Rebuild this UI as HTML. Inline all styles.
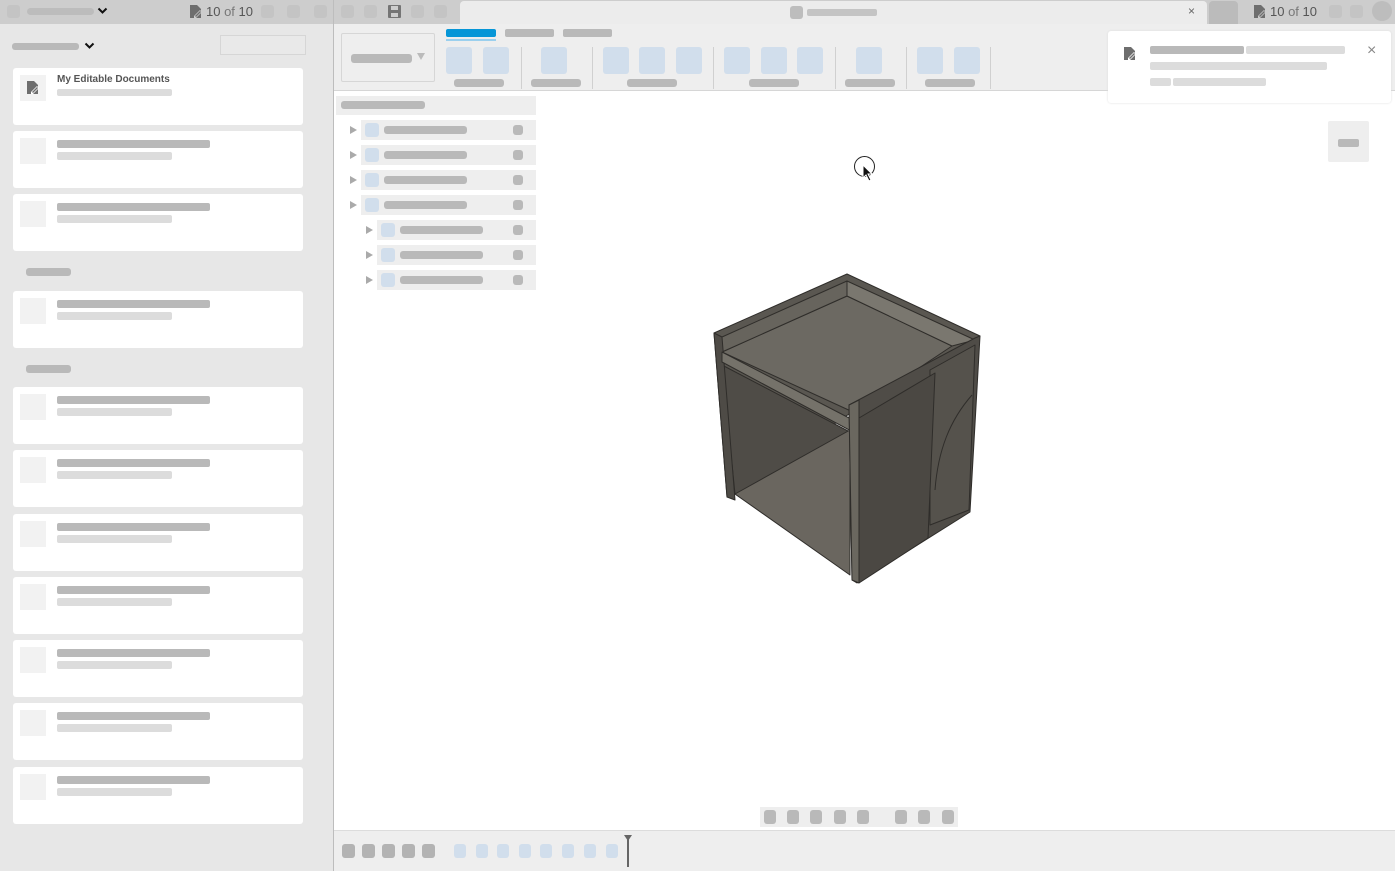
<!DOCTYPE html>
<html><head><meta charset="utf-8"><style>
*{margin:0;padding:0;box-sizing:border-box}
body{width:1395px;height:871px;position:relative;overflow:hidden;background:#fff;font-family:"Liberation Sans",sans-serif}
.a{position:absolute}
.g{background:#b9b9b9;border-radius:2px}
.l{background:#dcdcdc;border-radius:2px}
.sq{background:#c4c4c4;border-radius:3px}
.bl{background:#d1deec;border-radius:3px}
</style></head><body>
<div class="a" style="left:0;top:0;width:333px;height:871px;background:#e7e7e7"></div>
<div class="a" style="left:0;top:0;width:333px;height:24px;background:#cdcdcd"></div>
<div class="a sq" style="left:7px;top:5px;width:13px;height:13px"></div>
<div class="a g" style="left:27px;top:8px;width:67px;height:7px;border-radius:4px;background:#bcbcbc"></div>
<svg class="a" style="left:97px;top:7px" width="11" height="8"><path d="M1.5 1.5l4 4 4-4" fill="none" stroke="#111" stroke-width="2"/></svg>
<svg class="a" style="left:189px;top:4px" width="14" height="15"><path d="M1 1h7l4 4v9H1z" fill="#6e6e6e"/><path d="M5 12l6-6 2 2-6 6H5z" fill="#cdcdcd"/><path d="M6 12l5-5 1 1-5 5z" fill="#6e6e6e"/></svg>
<div class="a" style="left:206px;top:4px;font-size:13px;color:#555">10 <span style="color:#777">of</span> 10</div>
<div class="a sq" style="left:261px;top:5px;width:13px;height:13px"></div>
<div class="a sq" style="left:287px;top:5px;width:13px;height:13px"></div>
<div class="a sq" style="left:314px;top:5px;width:13px;height:13px"></div>
<div class="a" style="left:333px;top:0;width:1px;height:871px;background:#bdbdbd"></div>
<div class="a g" style="left:12px;top:43px;width:67px;height:7px;border-radius:3px"></div>
<svg class="a" style="left:84px;top:42px" width="11" height="8"><path d="M1.5 1.5l4 4 4-4" fill="none" stroke="#111" stroke-width="2"/></svg>
<div class="a" style="left:220px;top:35px;width:86px;height:20px;border:1px solid #d6d6d6;background:#e9e9e9"></div>

<div class="a" style="left:13px;top:68px;width:290px;height:57px;background:#fff;border-radius:3px"></div>
<div class="a" style="left:20px;top:75px;width:26px;height:26px;background:#f2f2f2"></div>
<svg class="a" style="left:26px;top:80px" width="14" height="15"><path d="M1 1h7l4 4v9H1z" fill="#6e6e6e"/><path d="M5 12l6-6 2 2-6 6H5z" fill="#fff"/><path d="M6 12l5-5 1 1-5 5z" fill="#6e6e6e"/></svg>
<div class="a" style="left:57px;top:74px;font-size:10px;color:#555;font-weight:bold">My Editable Documents</div>
<div class="a l" style="left:57px;top:89px;width:115px;height:7px"></div>

<div class="a g" style="left:26px;top:268px;width:45px;height:8px;border-radius:3px"></div>
<div class="a g" style="left:26px;top:365px;width:45px;height:8px;border-radius:3px"></div>

<div class="a" style="left:334px;top:0;width:1061px;height:24px;background:#cdcdcd"></div>
<div class="a sq" style="left:341px;top:5px;width:13px;height:13px"></div>
<div class="a sq" style="left:364px;top:5px;width:13px;height:13px"></div>
<svg class="a" style="left:388px;top:5px" width="13" height="13"><rect x="0" y="0" width="13" height="13" rx="1" fill="#757575"/><rect x="3" y="1" width="7" height="4" fill="#cdcdcd"/><rect x="3" y="8" width="7" height="4" fill="#cdcdcd"/></svg>
<div class="a sq" style="left:411px;top:5px;width:13px;height:13px"></div>
<div class="a sq" style="left:434px;top:5px;width:13px;height:13px"></div>
<div class="a" style="left:460px;top:1px;width:747px;height:23px;background:#ececec;border-radius:4px 4px 0 0"></div>
<div class="a sq" style="left:790px;top:6px;width:13px;height:13px;background:#bdbdbd"></div>
<div class="a l" style="left:807px;top:9px;width:70px;height:7px;background:#c4c4c4"></div>
<div class="a" style="left:1188px;top:4px;font-size:12px;color:#666">×</div>
<div class="a" style="left:1209px;top:1px;width:29px;height:23px;background:#bbb;border-radius:4px 4px 0 0"></div>
<svg class="a" style="left:1253px;top:4px" width="14" height="15"><path d="M1 1h7l4 4v9H1z" fill="#6e6e6e"/><path d="M5 12l6-6 2 2-6 6H5z" fill="#cdcdcd"/><path d="M6 12l5-5 1 1-5 5z" fill="#6e6e6e"/></svg>
<div class="a" style="left:1270px;top:4px;font-size:13px;color:#555">10 <span style="color:#777">of</span> 10</div>
<div class="a sq" style="left:1329px;top:5px;width:13px;height:13px"></div>
<div class="a sq" style="left:1350px;top:5px;width:13px;height:13px"></div>
<div class="a" style="left:1372px;top:1px;width:20px;height:20px;border-radius:50%;background:#bdbdbd"></div>

<div class="a" style="left:334px;top:24px;width:1061px;height:67px;background:#eeeeee;border-bottom:1px solid #d6d6d6"></div>
<div class="a" style="left:341px;top:33px;width:94px;height:49px;border:1px solid #d6d6d6;border-radius:2px"></div>
<div class="a g" style="left:351px;top:54px;width:61px;height:9px;border-radius:3px"></div>
<div class="a" style="left:417px;top:53px;width:0;height:0;border-left:4px solid transparent;border-right:4px solid transparent;border-top:7px solid #bbb"></div>
<div class="a" style="left:446px;top:29px;width:50px;height:8px;background:#0696d7;border-radius:2px"></div>
<div class="a" style="left:446px;top:39px;width:50px;height:2px;background:#9bd0ee"></div>
<div class="a g" style="left:505px;top:29px;width:49px;height:8px;border-radius:2px"></div>
<div class="a g" style="left:563px;top:29px;width:49px;height:8px;border-radius:2px"></div>

<div class="a" style="left:336px;top:96px;width:200px;height:19px;background:#eeeeee"></div>
<div class="a g" style="left:341px;top:101px;width:84px;height:8px;border-radius:3px"></div>

<div class="a" style="left:1108px;top:31px;width:283px;height:72px;background:#fff;border-radius:3px;box-shadow:0 0 2px #ddd"></div>
<svg class="a" style="left:1123px;top:46px" width="14" height="15"><path d="M1 1h7l4 4v9H1z" fill="#6e6e6e"/><path d="M5 12l6-6 2 2-6 6H5z" fill="#fff"/><path d="M6 12l5-5 1 1-5 5z" fill="#6e6e6e"/></svg>
<div class="a g" style="left:1150px;top:46px;width:94px;height:8px"></div>
<div class="a l" style="left:1246px;top:46px;width:99px;height:8px"></div>
<div class="a l" style="left:1150px;top:62px;width:177px;height:8px"></div>
<div class="a l" style="left:1150px;top:78px;width:21px;height:8px"></div>
<div class="a l" style="left:1173px;top:78px;width:93px;height:8px"></div>
<div class="a" style="left:1367px;top:42px;font-size:16px;color:#888">×</div>
<div class="a" style="left:1328px;top:121px;width:41px;height:41px;background:#eeeeee;border-radius:2px"></div>
<div class="a g" style="left:1338px;top:139px;width:21px;height:8px"></div>

<div class="a" style="left:854px;top:156px;width:21px;height:21px;border:1.5px solid #222;border-radius:50%"></div>
<svg class="a" style="left:862px;top:164px" width="12" height="18"><path d="M1 1v13l3-3 3 6 2-1-3-6h4z" fill="#111" stroke="#fff" stroke-width="1"/></svg>

<svg class="a" style="left:700px;top:260px" width="300" height="340" viewBox="700 260 300 340">
<g stroke="#2f2d2a" stroke-width="1" stroke-linejoin="round">
<polygon points="714,333 847,274 980,336 855,410 727,497" fill="#5a5751"/>
<polygon points="722,352 847,296 952,346 853,412" fill="#6c6962"/>
<polygon points="722,337 847,281 847,296 722,352" fill="#67645d"/>
<polygon points="847,281 975,340 952,346 847,296" fill="#7a776f"/>
<polygon points="722,365 850,432 850,572 735,494" fill="#4f4c47"/>
<polygon points="735,494 850,430 850,575" fill="#6a665f"/>
<polygon points="714,333 722,337 735,500 727,497" fill="#4e4b46"/>
<polygon points="722,352 853,420 853,432 722,362" fill="#75726a"/>
<polygon points="849,405 975,338 980,336 970,512 857,583 852,580" fill="#4f4c47"/>
<polygon points="930,370 975,345 969,510 930,525" fill="#55524c"/>
<path d="M972,395 C950,420 938,450 935,490" fill="none"/>
<polygon points="859,418 935,373 928,538 859,583" fill="#4b4843"/>
<polygon points="849,405 859,400 859,583 852,580" fill="#6a675f"/>
</g>
</svg>

<div class="a" style="left:760px;top:807px;width:198px;height:20px;background:#eeeeee"></div>

<div class="a" style="left:334px;top:830px;width:1061px;height:41px;background:#eeeeee;border-top:1px solid #dcdcdc"></div>
<div class="a" style="left:627px;top:838px;width:2px;height:29px;background:#666"></div>
<div class="a" style="left:624px;top:835px;width:0;height:0;border-left:4px solid transparent;border-right:4px solid transparent;border-top:6px solid #666"></div>

<script>
function add(h){document.body.insertAdjacentHTML('beforeend',h)}
[131,194,291,387,450,514,577,640,703,767].forEach(function(y){
add('<div class="a" style="left:13px;top:'+y+'px;width:290px;height:57px;background:#fff;border-radius:3px"></div>'+
'<div class="a" style="left:20px;top:'+(y+7)+'px;width:26px;height:26px;background:#f2f2f2"></div>'+
'<div class="a g" style="left:57px;top:'+(y+9)+'px;width:153px;height:8px"></div>'+
'<div class="a l" style="left:57px;top:'+(y+21)+'px;width:115px;height:8px"></div>')});
var bx=[446,483,541,603,639,676,724,761,797,856,917,954];
bx.forEach(function(x){add('<div class="a bl" style="left:'+x+'px;top:47px;width:26px;height:27px"></div>')});
[[454,50],[531,50],[627,50],[749,50],[845,50],[925,50]].forEach(function(p){add('<div class="a g" style="left:'+p[0]+'px;top:79px;width:'+p[1]+'px;height:8px;border-radius:3px"></div>')});
[521,592,713,835,906,990].forEach(function(x){add('<div class="a" style="left:'+x+'px;top:47px;width:1px;height:42px;background:#d0d0d0"></div>')});
[[130,0],[155,0],[180,0],[205,0],[230,1],[255,1],[280,1]].forEach(function(r){var y=r[0],o=r[1]*16;
add('<div class="a" style="left:'+(361+o)+'px;top:'+(y-10)+'px;width:'+(175-o)+'px;height:20px;background:#eeeeee"></div>'+
'<div class="a" style="left:'+(350+o)+'px;top:'+(y-4)+'px;width:0;height:0;border-top:4px solid transparent;border-bottom:4px solid transparent;border-left:7px solid #aaa"></div>'+
'<div class="a bl" style="left:'+(365+o)+'px;top:'+(y-7)+'px;width:14px;height:14px"></div>'+
'<div class="a g" style="left:'+(384+o)+'px;top:'+(y-4)+'px;width:83px;height:8px;border-radius:3px"></div>'+
'<div class="a sq" style="left:513px;top:'+(y-5)+'px;width:10px;height:10px;background:#b9b9b9"></div>')});
[764,787,810,834,857,895,918,942].forEach(function(x){add('<div class="a sq" style="left:'+x+'px;top:810px;width:12px;height:14px;background:#b9b9b9"></div>')});
[342,362,382,402,422].forEach(function(x){add('<div class="a sq" style="left:'+x+'px;top:844px;width:13px;height:14px;background:#b3b3b3"></div>')});
[454,476,497,519,540,562,584,606].forEach(function(x){add('<div class="a bl" style="left:'+x+'px;top:844px;width:12px;height:14px"></div>')});
</script>
</body></html>
